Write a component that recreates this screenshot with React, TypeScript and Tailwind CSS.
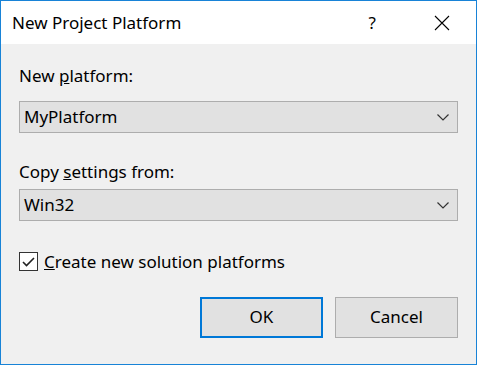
import React from "react";

const Chevron = () => (
  <svg width="12" height="7" viewBox="0 0 12 7" fill="none" stroke="#333" strokeWidth="1.2">
    <path d="M0.5 0.5L6 6L11.5 0.5" />
  </svg>
);

const Combo = ({ value }: { value: string }) => (
  <div className="h-[32px] w-full border border-[#adadad] bg-[#e1e1e1] flex items-center justify-between pl-[4px] pr-[8px] text-[17px] text-black">
    <span>{value}</span>
    <Chevron />
  </div>
);

export default function App() {
  return (
    <div
      className="w-[477px] h-[365px] border border-[#1883d7] flex flex-col bg-[#f0f0f0] text-black"
      style={{ fontFamily: '"Segoe UI", "Noto Sans", "Open Sans", sans-serif' }}
    >
      <div className="h-[43px] bg-white flex items-center justify-between pl-[11px] pr-[26px] shrink-0">
        <span className="text-[17px]">New Project Platform</span>
        <div className="flex items-center gap-[58px]">
          <span className="text-[17px]">?</span>
          <svg width="16" height="16" viewBox="0 0 16 16" stroke="#000" strokeWidth="1.1">
            <path d="M1 1L15 15M15 1L1 15" />
          </svg>
        </div>
      </div>

      <div className="flex flex-col px-[18px] pt-[20px]">
        <label className="text-[17px] leading-[24px] mb-[13px]">
          New <u>p</u>latform:
        </label>
        <Combo value="MyPlatform" />

        <label className="text-[17px] leading-[24px] mt-[27px] mb-[5px]">
          Copy <u>s</u>ettings from:
        </label>
        <Combo value="Win32" />

        <div className="flex items-center gap-[6px] mt-[28px]">
          <div className="w-[19px] h-[19px] border border-[#333] bg-white flex items-center justify-center">
            <svg width="13" height="10" viewBox="0 0 13 10" fill="none" stroke="#222" strokeWidth="1.6">
              <path d="M1 5L4.5 8.5L12 1" />
            </svg>
          </div>
          <span className="text-[17px]">
            <u>C</u>reate new solution platforms
          </span>
        </div>

        <div className="flex justify-end gap-[12px] mt-[22px]">
          <button className="w-[123px] h-[41px] border-2 border-[#0078d7] bg-[#e1e1e1] text-[17px]">OK</button>
          <button className="w-[123px] h-[41px] border border-[#adadad] bg-[#e1e1e1] text-[17px]">Cancel</button>
        </div>
      </div>
    </div>
  );
}
